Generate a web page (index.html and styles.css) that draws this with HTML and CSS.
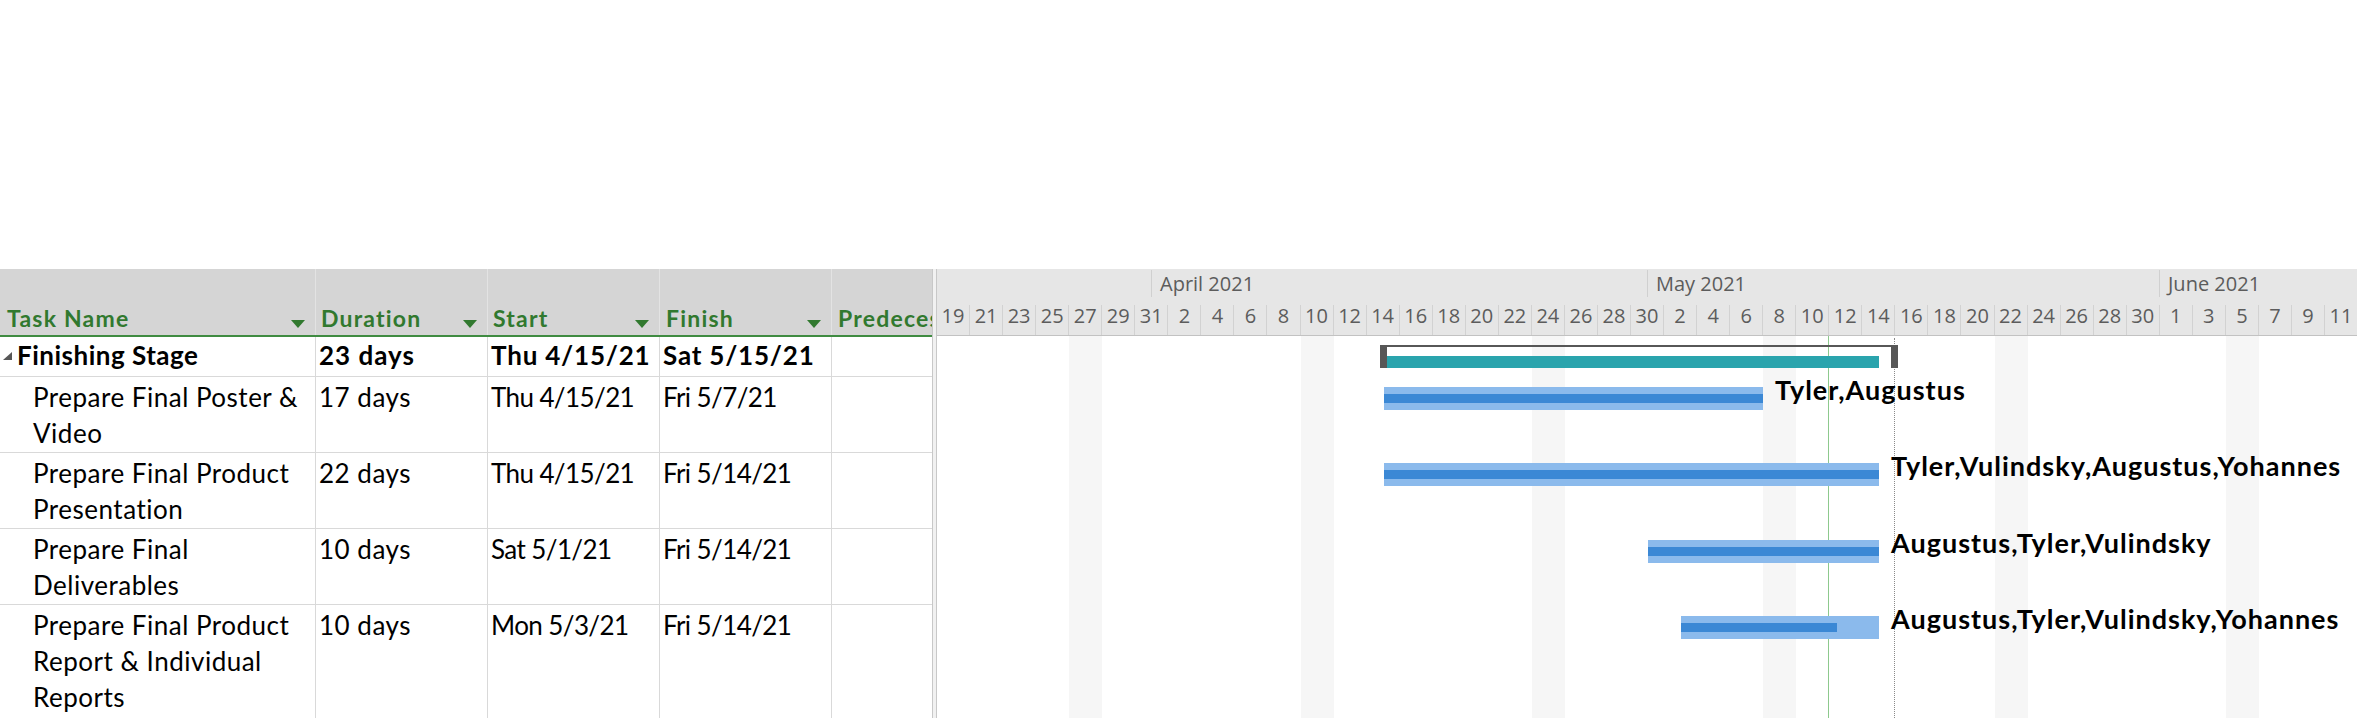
FILE: index.html
```html
<!DOCTYPE html>
<html lang="en">
<head>
<meta charset="utf-8">
<title>Gantt Chart</title>
<link rel="stylesheet" href="styles.css">
</head>
<body>
<div class="top-space"></div>
<div class="view">
  <div class="table">
    <div class="thead">
      <div class="th c-name"><span class="th-text">Task Name</span><svg class="dd" width="14" height="8" viewBox="0 0 14 8"><polygon points="0,0 14,0 7,8"/></svg></div>
      <div class="th c-dur"><span class="th-text">Duration</span><svg class="dd" width="14" height="8" viewBox="0 0 14 8"><polygon points="0,0 14,0 7,8"/></svg></div>
      <div class="th c-start"><span class="th-text">Start</span><svg class="dd" width="14" height="8" viewBox="0 0 14 8"><polygon points="0,0 14,0 7,8"/></svg></div>
      <div class="th c-fin"><span class="th-text">Finish</span><svg class="dd" width="14" height="8" viewBox="0 0 14 8"><polygon points="0,0 14,0 7,8"/></svg></div>
      <div class="th c-pred"><span class="th-text">Predecessors</span></div>
    </div>
    <div class="row summary">
      <div class="td c-name"><svg class="collapse" width="9" height="8" viewBox="0 0 9 8"><polygon points="9,0 9,8 0,8"/></svg>Finishing Stage</div>
      <div class="td c-dur">23 days</div>
      <div class="td c-start">Thu 4/15/21</div>
      <div class="td c-fin">Sat 5/15/21</div>
      <div class="td c-pred"></div>
    </div>
    <div class="row">
      <div class="td c-name sub">Prepare Final Poster &amp; Video</div>
      <div class="td c-dur">17 days</div>
      <div class="td c-start">Thu 4/15/21</div>
      <div class="td c-fin">Fri 5/7/21</div>
      <div class="td c-pred"></div>
    </div>
    <div class="row">
      <div class="td c-name sub">Prepare Final Product Presentation</div>
      <div class="td c-dur">22 days</div>
      <div class="td c-start">Thu 4/15/21</div>
      <div class="td c-fin">Fri 5/14/21</div>
      <div class="td c-pred"></div>
    </div>
    <div class="row">
      <div class="td c-name sub">Prepare Final Deliverables</div>
      <div class="td c-dur">10 days</div>
      <div class="td c-start">Sat 5/1/21</div>
      <div class="td c-fin">Fri 5/14/21</div>
      <div class="td c-pred"></div>
    </div>
    <div class="row last">
      <div class="td c-name sub">Prepare Final Product Report &amp; Individual Reports</div>
      <div class="td c-dur">10 days</div>
      <div class="td c-start">Mon 5/3/21</div>
      <div class="td c-fin">Fri 5/14/21</div>
      <div class="td c-pred"></div>
    </div>
  </div>
  <div class="split"></div>
  <div class="chart">
    <div class="tscale">
      <div class="months">
        <div class="month m-mar"></div>
        <div class="month m-apr">April 2021</div>
        <div class="month m-may">May 2021</div>
        <div class="month m-jun">June 2021</div>
      </div>
      <div class="days">
        <div class="day">19</div><div class="day">21</div><div class="day">23</div><div class="day">25</div><div class="day">27</div><div class="day">29</div><div class="day">31</div>
        <div class="day">2</div><div class="day">4</div><div class="day">6</div><div class="day">8</div><div class="day">10</div><div class="day">12</div><div class="day">14</div><div class="day">16</div><div class="day">18</div><div class="day">20</div><div class="day">22</div><div class="day">24</div><div class="day">26</div><div class="day">28</div><div class="day">30</div>
        <div class="day">2</div><div class="day">4</div><div class="day">6</div><div class="day">8</div><div class="day">10</div><div class="day">12</div><div class="day">14</div><div class="day">16</div><div class="day">18</div><div class="day">20</div><div class="day">22</div><div class="day">24</div><div class="day">26</div><div class="day">28</div><div class="day">30</div>
        <div class="day">1</div><div class="day">3</div><div class="day">5</div><div class="day">7</div><div class="day">9</div><div class="day">11</div>
      </div>
    </div>
    <div class="cbody">
      <div class="cols">
        <div class="col"></div><div class="col"></div><div class="col"></div><div class="col"></div><div class="col we"></div><div class="col"></div><div class="col"></div>
        <div class="col"></div><div class="col"></div><div class="col"></div><div class="col"></div><div class="col we"></div><div class="col"></div><div class="col"></div>
        <div class="col"></div><div class="col"></div><div class="col"></div><div class="col"></div><div class="col we"></div><div class="col"></div><div class="col"></div>
        <div class="col"></div><div class="col"></div><div class="col"></div><div class="col"></div><div class="col we"></div><div class="col"></div><div class="col"></div>
        <div class="col"></div><div class="col"></div><div class="col"></div><div class="col"></div><div class="col we"></div><div class="col"></div><div class="col"></div>
        <div class="col"></div><div class="col"></div><div class="col"></div><div class="col"></div><div class="col we"></div><div class="col"></div><div class="col"></div>
        <div class="col"></div>
      </div>
      <div class="today" style="left:891px"></div>
      <div class="deadline" style="left:957px"></div>

      <div class="sumbar" style="left:443px; width:518px; top:9px">
        <div class="sum-left"></div>
        <div class="sum-fill" style="width:492px"></div>
        <div class="sum-right"></div>
      </div>

      <div class="bar" style="left:447px; width:379px; top:51px"><div class="prog" style="width:379px"></div></div>
      <div class="label" style="left:838px; top:40px">Tyler,Augustus</div>

      <div class="bar" style="left:447px; width:495px; top:127px"><div class="prog" style="width:495px"></div></div>
      <div class="label" style="left:954px; top:116px">Tyler,Vulindsky,Augustus,Yohannes</div>

      <div class="bar" style="left:711px; width:231px; top:204px"><div class="prog" style="width:231px"></div></div>
      <div class="label" style="left:954px; top:193px">Augustus,Tyler,Vulindsky</div>

      <div class="bar" style="left:744px; width:198px; top:280px"><div class="prog" style="width:156px"></div></div>
      <div class="label" style="left:954px; top:269px">Augustus,Tyler,Vulindsky,Yohannes</div>
    </div>
  </div>
</div>
</body>
</html>
```
FILE: styles.css
```css
html, body {
  margin: 0;
  padding: 0;
  background: #ffffff;
  overflow: hidden;
}
body {
  width: 2357px;
  height: 718px;
  font-family: "Lato", "Liberation Sans", sans-serif;
  color: #000;
}
.top-space {
  height: 269px;
}
.view {
  display: flex;
  height: 449px;
  overflow: hidden;
}

/* ---------- table ---------- */
.table {
  width: 932px;
  flex: 0 0 932px;
  display: flex;
  flex-direction: column;
}
.thead, .row {
  display: grid;
  grid-template-columns: 316px 172px 172px 172px 100px;
  flex-shrink: 0;
}
.thead {
  height: 66px;
  background: #d5d5d5;
  border-bottom: 2px solid #3f8b41;
}
.th {
  display: flex;
  align-items: flex-end;
  padding: 0 10px 5px 6px;
  border-right: 1px solid #e3e3e3;
  overflow: hidden;
  white-space: nowrap;
  font-weight: 700;
  font-size: 23px;
  letter-spacing: 1.2px;
  line-height: 24px;
  color: #31792f;
}
.th.c-name { padding-left: 7px; }
.th.c-dur { padding-left: 5px; }
.th.c-start { padding-left: 5px; }
.th.c-pred { border-right: none; padding-right: 0; }
.th-text { flex: 1 1 auto; }
.dd {
  flex: 0 0 14px;
  margin-bottom: 2px;
  fill: #31792f;
}
.row {
  border-bottom: 1px solid #d9d9d9;
}
.td {
  padding: 2px 4px 1px 3px;
  border-right: 1px solid #d9d9d9;
  font-size: 26px;
  letter-spacing: 0.5px;
  line-height: 36px;
  min-height: 36px;
}
.td.c-dur, .td.c-start, .td.c-fin { white-space: nowrap; overflow: hidden; }
.td.c-start, .td.c-fin { letter-spacing: -0.6px; }
.td.c-pred { border-right: none; }
.td.sub { padding-left: 33px; }
.row.last .td { padding-bottom: 3px; }
.summary .td {
  font-weight: 700;
  padding-top: 0;
  padding-bottom: 3px;
}
.summary .td.c-dur { letter-spacing: 1px; }
.summary .td.c-start, .summary .td.c-fin { letter-spacing: 0.8px; }
.summary .td.c-name { padding-left: 3px; }
.collapse {
  fill: #575757;
  margin-right: 5px;
  vertical-align: 5px;
}

/* ---------- splitter ---------- */
.split {
  flex: 0 0 3px;
  background: #f1f1f1;
  border-left: 1px solid #c8c8c8;
  border-right: 1px solid #c8c8c8;
}

/* ---------- chart ---------- */
.chart {
  flex: 1 1 auto;
  display: flex;
  flex-direction: column;
  overflow: hidden;
  font-family: "Open Sans", "Noto Sans", sans-serif;
}
.tscale {
  height: 66px;
  background: #e6e6e6;
  border-bottom: 1px solid #c2c2c2;
  flex: 0 0 auto;
}
.months {
  display: flex;
  height: 27px;
  margin-top: 1px;
}
.month {
  flex: 0 0 auto;
  box-sizing: border-box;
  padding-left: 8px;
  font-size: 20px;
  line-height: 27px;
  color: #5c5c5c;
  white-space: nowrap;
}
.m-mar { width: 214px; padding-left: 0; }
.m-apr { width: 496px; border-left: 1px solid #d0d0d0; }
.m-may { width: 512px; border-left: 1px solid #d0d0d0; }
.m-jun { width: 300px; border-left: 1px solid #d0d0d0; }
.days {
  display: flex;
  height: 30px;
  margin-top: 8px;
}
.day {
  flex: 0 0 33.06px;
  box-sizing: border-box;
  border-right: 1px solid #d2d2d2;
  text-align: center;
  font-size: 20px;
  line-height: 22px;
  color: #5c5c5c;
}
.cbody {
  position: relative;
  flex: 1 1 auto;
  overflow: hidden;
}
.cols {
  display: flex;
  height: 100%;
}
.col {
  flex: 0 0 33.06px;
}
.col.we {
  background: #f6f6f6;
}
.today {
  position: absolute;
  top: 0;
  bottom: 0;
  width: 1px;
  background: #8dc98d;
}
.deadline {
  position: absolute;
  top: 2px;
  bottom: 0;
  width: 0;
  border-left: 1px dotted #8a8a8a;
}
.sumbar {
  position: absolute;
  height: 23px;
  display: flex;
  align-items: flex-end;
  box-sizing: border-box;
  border-top: 2px solid #575757;
}
.sum-left {
  width: 7px;
  height: 21px;
  background: #575757;
}
.sum-fill {
  height: 12px;
  background: #2aa4ad;
}
.sum-right {
  margin-left: auto;
  width: 7px;
  height: 21px;
  background: #575757;
}
.bar {
  position: absolute;
  height: 23px;
  background: #8bbaec;
}
.prog {
  margin-top: 7px;
  height: 9px;
  background: #3b88d5;
}
.label {
  position: absolute;
  font-family: "Lato", "Liberation Sans", sans-serif;
  font-weight: 700;
  font-size: 27px;
  letter-spacing: 1px;
  line-height: 27px;
  color: #000;
  white-space: nowrap;
}
```
